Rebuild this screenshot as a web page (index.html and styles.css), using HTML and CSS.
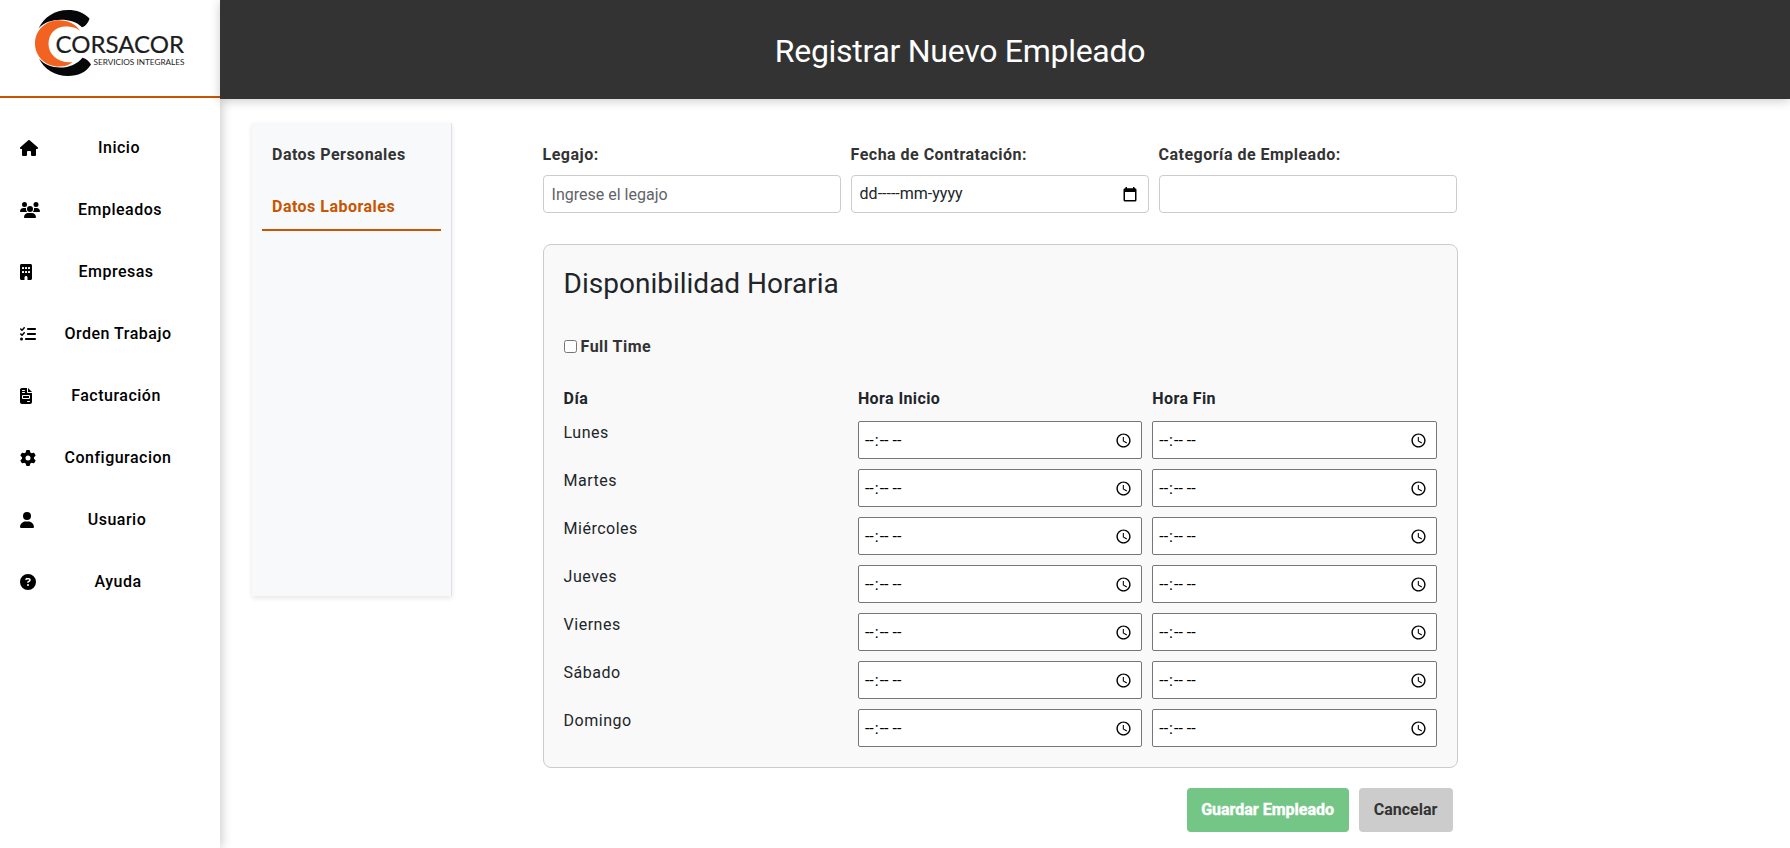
FILE: index.html
```html
<!DOCTYPE html>
<html lang="es">
<head>
<meta charset="utf-8">
<title>Registrar Nuevo Empleado</title>
<link rel="stylesheet" href="styles.css">
</head>
<body>
<div class="app">
  <aside class="sidebar">
    <div class="brand">
      <svg class="logo" viewBox="0 0 150 68" width="150" height="68" role="img" aria-label="Corsacor Servicios Integrales">
        <path fill="#050708" d="M3.5 18.500C9 7 20 0 33 0c8.500 0 16 2.500 21.500 8.500c-1 3.800-3.500 7.500-7.500 8.800C42 12 34 9.800 26 9.800C17 9.800 9 12.500 3.500 18.500z"/>
        <path fill="#050708" d="M4 48.500C9 59 20 66 33 66c10 0 18-3.500 23-11.500c-2-3.500-4.500-5.800-8.500-6.800C42 54 35 57.500 25 57.500C17 57.500 9 54.500 4 48.500z"/>
        <path fill="#f26322" d="M45 21C41 14 33 10.300 24 10.300C10.500 10.300 0 20.500 0 33.500S10.500 56.500 24 56.500c6 0 10.500-1.500 13.500-4.300C23 53.500 13.500 44.500 13.500 34S21 16.500 30.500 16.500c6 0 10.500 1 14.500 4.500z"/>
        <text class="logo-name" x="20.500" y="43.300" textLength="128.500" lengthAdjust="spacingAndGlyphs">CORSACOR</text>
        <text class="logo-sub" x="58.500" y="55" textLength="91" lengthAdjust="spacingAndGlyphs">SERVICIOS INTEGRALES</text>
      </svg>
    </div>
    <nav class="nav">
      <a class="nav-item"><svg width="18" height="16" viewBox="0 0 576 512"><path d="M575.8 255.5c0 18-15 32.1-32 32.1h-32l.7 160.2c0 2.7-.2 5.4-.5 8.1V472c0 22.1-17.9 40-40 40H392c-22.1 0-40-17.9-40-40V384c0-17.7-14.3-32-32-32H256c-17.7 0-32 14.3-32 32v88c0 22.1-17.9 40-40 40H104c-22.100 0-40-17.900-40-40V287.600H32c-18 0-32-14-32-32.100c0-9 3-17 10-24L266.400 8c7-7 15-8 22-8s15 2 21 7L564.800 231.500c8 7 12 15 11 24z"/></svg><span>Inicio</span></a>
      <a class="nav-item"><svg width="20" height="16" viewBox="0 0 640 512"><path d="M144 0a80 80 0 1 1 0 160A80 80 0 1 1 144 0zM512 0a80 80 0 1 1 0 160A80 80 0 1 1 512 0zM0 298.7C0 239.8 47.8 192 106.7 192h42.7c15.9 0 31 3.5 44.6 9.7c-1.3 7.2-1.9 14.7-1.9 22.3c0 38.2 16.8 72.5 43.3 96H21.3C9.6 320 0 310.4 0 298.7zM405.300 320c26.600-23.500 43.300-57.800 43.300-96c0-7.600-.7-15-1.900-22.300c13.600-6.300 28.700-9.700 44.600-9.700h42.700C592.200 192 640 239.800 640 298.700c0 11.800-9.600 21.300-21.300 21.300H405.300zM224 224a96 96 0 1 1 192 0 96 96 0 1 1 -192 0zM128 485.300C128 411.700 187.700 352 261.300 352H378.700C452.300 352 512 411.700 512 485.300c0 14.700-11.900 26.700-26.700 26.700H154.700c-14.700 0-26.700-11.900-26.700-26.700z"/></svg><span>Empleados</span></a>
      <a class="nav-item"><svg width="12" height="16" viewBox="0 0 384 512"><path fill-rule="evenodd" d="M48 0C21.500 0 0 21.500 0 48V464c0 26.500 21.500 48 48 48h96V432c0-26.500 21.500-48 48-48s48 21.500 48 48v80h96c26.500 0 48-21.500 48-48V48c0-26.500-21.500-48-48-48H48zM80 96h32q16 0 16 16v32q0 16-16 16H80q-16 0-16-16v-32q0-16 16-16zM176 96h32q16 0 16 16v32q0 16-16 16H176q-16 0-16-16v-32q0-16 16-16zM272 96h32q16 0 16 16v32q0 16-16 16H272q-16 0-16-16v-32q0-16 16-16zM80 224h32q16 0 16 16v32q0 16-16 16H80q-16 0-16-16v-32q0-16 16-16zM176 224h32q16 0 16 16v32q0 16-16 16H176q-16 0-16-16v-32q0-16 16-16zM272 224h32q16 0 16 16v32q0 16-16 16H272q-16 0-16-16v-32q0-16 16-16z"/></svg><span>Empresas</span></a>
      <a class="nav-item"><svg width="16" height="16" viewBox="0 0 512 512"><path d="M152.1 38.2c9.9 8.9 10.7 24 1.8 33.9l-72 80c-4.4 4.9-10.6 7.8-17.2 7.9s-12.9-2.4-17.6-7L7 113C-2.300 103.600-2.300 88.400 7 79s24.600-9.400 33.900 0l22.100 22.100 55.100-61.200c8.900-9.900 24-10.700 33.900-1.800zm0 160c9.900 8.900 10.700 24 1.800 33.900l-72 80c-4.400 4.900-10.600 7.800-17.200 7.900s-12.900-2.400-17.600-7L7 273c-9.400-9.400-9.400-24.600 0-33.900s24.600-9.400 33.900 0l22.100 22.100 55.100-61.200c8.900-9.900 24-10.700 33.900-1.800zM224 96c0-17.700 14.300-32 32-32H480c17.700 0 32 14.300 32 32s-14.300 32-32 32H256c-17.700 0-32-14.300-32-32zm0 160c0-17.700 14.300-32 32-32H480c17.700 0 32 14.300 32 32s-14.300 32-32 32H256c-17.700 0-32-14.300-32-32zM160 416c0-17.700 14.300-32 32-32H480c17.700 0 32 14.300 32 32s-14.300 32-32 32H192c-17.700 0-32-14.300-32-32zM48 368a48 48 0 1 1 0 96 48 48 0 1 1 0-96z"/></svg><span>Orden Trabajo</span></a>
      <a class="nav-item"><svg width="12" height="16" viewBox="0 0 384 512"><path fill-rule="evenodd" d="M64 0C28.700 0 0 28.700 0 64V448c0 35.300 28.700 64 64 64H320c35.300 0 64-28.700 64-64V160H256c-17.700 0-32-14.300-32-32V0H64zM256 0V128H384L256 0zM80 64h64q16 0 16 16t-16 16H80q-16 0-16-16t16-16zM80 128h64q16 0 16 16t-16 16H80q-16 0-16-16t16-16zM96 224H288q32 0 32 32v64q0 32-32 32H96q-32 0-32-32v-64q0-32 32-32zM96 256v64H288V256H96zM240 416h64q16 0 16 16t-16 16H240q-16 0-16-16t16-16z"/></svg><span>Facturación</span></a>
      <a class="nav-item"><svg width="16" height="16" viewBox="0 0 512 512"><path d="M495.9 166.6c3.2 8.7 .5 18.4-6.4 24.6l-43.3 39.4c1.1 8.3 1.7 16.8 1.7 25.4s-.6 17.1-1.7 25.4l43.3 39.4c6.9 6.2 9.6 15.9 6.4 24.6c-4.400 11.900-9.700 23.300-15.800 34.300l-4.700 8.100c-6.600 11-14 21.400-22.100 31.200c-5.900 7.200-15.700 9.600-24.500 6.800l-55.700-17.700c-13.400 10.300-28.200 18.900-44 25.400l-12.500 57.100c-2 9.100-9 16.300-18.200 17.800c-13.800 2.300-28 3.500-42.500 3.500s-28.700-1.200-42.500-3.500c-9.200-1.500-16.200-8.700-18.200-17.800l-12.500-57.100c-15.800-6.500-30.600-15.100-44-25.400L83.100 425.900c-8.800 2.800-18.600 .3-24.500-6.800c-8.100-9.800-15.500-20.200-22.100-31.200l-4.700-8.100c-6.100-11-11.400-22.400-15.800-34.300c-3.200-8.700-.5-18.400 6.400-24.600l43.300-39.400C64.600 273.100 64 264.600 64 256s.6-17.100 1.700-25.400L22.400 191.200c-6.900-6.200-9.600-15.900-6.400-24.600c4.400-11.900 9.700-23.300 15.800-34.300l4.700-8.100c6.600-11 14-21.400 22.100-31.200c5.900-7.200 15.700-9.600 24.500-6.800l55.700 17.700c13.400-10.300 28.200-18.900 44-25.400l12.500-57.100c2-9.100 9-16.300 18.200-17.800C227.300 1.200 241.500 0 256 0s28.700 1.200 42.500 3.500c9.200 1.500 16.200 8.700 18.200 17.800l12.500 57.100c15.800 6.500 30.600 15.100 44 25.400l55.700-17.700c8.800-2.800 18.600-.3 24.500 6.800c8.100 9.800 15.500 20.200 22.100 31.200l4.700 8.100c6.100 11 11.400 22.400 15.800 34.300zM256 336a80 80 0 1 0 0-160 80 80 0 1 0 0 160z"/></svg><span>Configuracion</span></a>
      <a class="nav-item"><svg width="14" height="16" viewBox="0 0 448 512"><path d="M224 256A128 128 0 1 0 224 0a128 128 0 1 0 0 256zm-45.700 48C79.800 304 0 383.800 0 482.300C0 498.700 13.300 512 29.700 512H418.300c16.400 0 29.700-13.300 29.700-29.700C448 383.800 368.200 304 269.700 304H178.300z"/></svg><span>Usuario</span></a>
      <a class="nav-item"><svg width="16" height="16" viewBox="0 0 512 512"><path d="M256 512A256 256 0 1 0 256 0a256 256 0 1 0 0 512zM169.800 165.300c7.900-22.300 29.100-37.300 52.800-37.300h58.300c34.900 0 63.100 28.300 63.100 63.100c0 22.600-12.100 43.500-31.700 54.800L280 264.400c-.2 13-10.900 23.600-24 23.600c-13.300 0-24-10.700-24-24V250.500c0-8.600 4.600-16.500 12.100-20.800l44.300-25.400c4.700-2.700 7.600-7.700 7.600-13.100c0-8.400-6.800-15.100-15.100-15.100H222.600c-3.400 0-6.400 2.100-7.500 5.300l-.4 1.200c-4.400 12.500-18.200 19-30.600 14.600s-19-18.200-14.600-30.600l.4-1.200zM224 352a32 32 0 1 1 64 0 32 32 0 1 1 -64 0z"/></svg><span>Ayuda</span></a>
    </nav>
  </aside>
  <div class="page">
    <header class="header"><h1>Registrar Nuevo Empleado</h1></header>
    <main class="content">
      <div class="tabs">
        <div class="tab">Datos Personales</div>
        <div class="tab tab-active">Datos Laborales</div>
      </div>
      <form class="form">
        <div class="fields">
          <div class="field"><label>Legajo:</label><input class="control" type="text" placeholder="Ingrese el legajo"></div>
          <div class="field"><label>Fecha de Contratación:</label>
            <div class="control date"><span>dd-----mm-yyyy</span>
              <svg width="14" height="15" viewBox="0 0 14 15"><path fill-rule="evenodd" d="M2.500 0H4v1.300h6V0h1.500v1.300H12q1.500 0 1.500 1.500V13q0 1.500-1.500 1.500H2Q.5 14.500 .5 13V2.800Q.5 1.300 2 1.300h.5zM2 5v8h10V5z"/></svg>
            </div>
          </div>
          <div class="field"><label>Categoría de Empleado:</label><input class="control" type="text"></div>
        </div>
        <section class="schedule">
          <h2>Disponibilidad Horaria</h2>
          <label class="fulltime"><input type="checkbox"><span>Full Time</span></label>
          <div class="hours">
            <b>Día</b><b>Hora Inicio</b><b>Hora Fin</b>
            <span>Lunes</span><input type="time"><input type="time">
            <span>Martes</span><input type="time"><input type="time">
            <span>Miércoles</span><input type="time"><input type="time">
            <span>Jueves</span><input type="time"><input type="time">
            <span>Viernes</span><input type="time"><input type="time">
            <span>Sábado</span><input type="time"><input type="time">
            <span>Domingo</span><input type="time"><input type="time">
          </div>
        </section>
        <div class="actions">
          <button type="button" class="btn btn-save">Guardar Empleado</button>
          <button type="button" class="btn btn-cancel">Cancelar</button>
        </div>
      </form>
    </main>
  </div>
</div>
</body>
</html>
```

FILE: styles.css
```css
* { box-sizing: border-box; }

body {
  margin: 0;
  height: 848px;
  overflow: hidden;
  background: #fff;
  color: #212529;
  font: 400 16px/24px Roboto, sans-serif;
  letter-spacing: 0.5px;
}

.app { display: flex; height: 848px; }

.sidebar {
  width: 220px;
  flex: none;
  background: #fff;
  box-shadow: 2px 0 10px rgba(0, 0, 0, 0.2);
}

.brand {
  height: 98px;
  padding: 10px 0 0 35px;
  border-bottom: 2px solid #c85500;
}

.logo { display: block; }
.logo-name { font: 400 23.5px Lato, sans-serif; fill: #1d1d1d; stroke: #1d1d1d; stroke-width: 0.2px; letter-spacing: 0; }
.logo-sub { font: 400 8px Lato, sans-serif; fill: #1d1d1d; letter-spacing: 0; }

.nav { display: flex; flex-direction: column; padding-top: 18px; }

.nav-item {
  display: flex;
  align-items: center;
  height: 62px;
  padding: 0 20px;
  color: #000;
  font-weight: 500;
}

.nav-item svg { flex: none; margin-top: 2px; }
.nav-item span { flex: 1; padding-top: 2px; text-align: center; }

.page { flex: 1; display: flex; flex-direction: column; }

.header {
  height: 99px;
  display: flex;
  justify-content: center;
  padding: 32px 90px 0 0;
  background: #333;
  color: #fff;
  box-shadow: 0 2px 10px rgba(0, 0, 0, 0.2);
}

h1 { margin: 0; font-size: 32px; line-height: 38px; font-weight: 400; letter-spacing: -0.28px; }

.content { display: flex; align-items: flex-start; gap: 90.6px; padding: 24px 0 0 32px; }

.tabs {
  width: 200px;
  height: 473px;
  flex: none;
  padding: 10px;
  background: #f8f9fa;
  border-right: 1px solid #dee2e6;
  box-shadow: 0 2px 5px rgba(0, 0, 0, 0.1);
}

.tab {
  height: 44px;
  margin-bottom: 8px;
  padding: 10px;
  border-bottom: 2px solid transparent;
  color: #333;
  font-weight: 700;
  letter-spacing: 0.48px;
}

.tab-active { height: 46px; color: #c85500; border-color: #c85500; }

.form { width: 915px; padding-top: 20px; }

.fields { display: flex; gap: 10px; }

.field { width: 298px; }

label { display: block; color: #333; font-weight: 700; letter-spacing: 0.48px; }

.control {
  display: block;
  width: 100%;
  height: 38px;
  margin-top: 8px;
  padding: 0 8px;
  border: 1px solid #ccc;
  border-radius: 4px;
  background: #fff;
  color: #212529;
  font: 400 16px/24px Roboto, sans-serif;
  letter-spacing: 0;
}

.control::placeholder { color: #5f6368; }

.date { display: flex; align-items: center; justify-content: space-between; padding-right: 11px; }

.schedule {
  height: 524px;
  margin-top: 31px;
  padding: 20px;
  border: 1px solid #ccc;
  border-radius: 8px;
  background: #f9f9f9;
}

h2 { margin: 0; font-size: 28px; line-height: 38px; font-weight: 400; letter-spacing: 0; }

.fulltime { display: flex; align-items: center; gap: 4px; margin-top: 32px; height: 24px; }
.fulltime input { margin: 0 0 2px; width: 13px; height: 13px; }

.hours { display: grid; grid-template-columns: repeat(3, 1fr); column-gap: 10px; row-gap: 10px; margin-top: 28px; }
.hours b { letter-spacing: 0.4px; }
.hours input {
  height: 38px;
  padding: 0 6px 0 5px;
  border: 1px solid #767676;
  border-radius: 2px;
  background: #fff;
  color: #000;
  font: 400 16px Roboto, sans-serif;
  letter-spacing: 0.15px;
}
.hours input::-webkit-calendar-picker-indicator { width: 17px; height: 17px; }

.actions { display: flex; justify-content: flex-end; gap: 10px; padding: 20px 5px 0 0; }

.btn {
  height: 44px;
  padding: 0 0 2px;
  border: 0;
  border-radius: 4px;
  font: 700 16px Roboto, sans-serif;
  letter-spacing: 0;
}

.btn-save { width: 162px; background: #74c687; color: #fff; -webkit-text-stroke: 0.4px #fff; }
.btn-cancel { width: 94px; background: #ccc; color: #333; }
```
